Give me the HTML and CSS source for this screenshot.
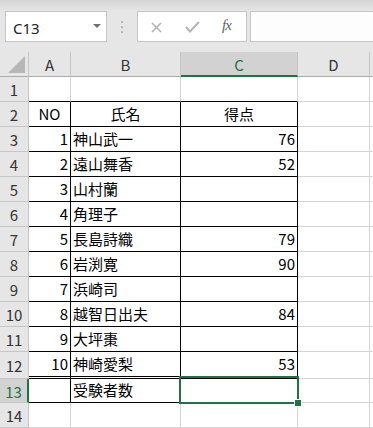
FILE: index.html
```html
<!DOCTYPE html>
<html lang="ja">
<head>
    <meta charset="UTF-8">
    <title>Excel - 受験者数</title>
    <link rel="stylesheet" href="styles.css">
</head>
<body>
    <div class="app">
        <div class="top-band"></div>

        <div class="formula-row">
            <div class="name-box">
                <span class="name-text">C13</span>
                <span class="caret"></span>
            </div>
            <div class="grip">
                <svg width="3" height="12" viewBox="0 0 3 12">
                    <rect x="0" y="0" width="2" height="2" fill="#b9b9b9"/>
                    <rect x="0" y="5" width="2" height="2" fill="#b9b9b9"/>
                    <rect x="0" y="10" width="2" height="2" fill="#b9b9b9"/>
                </svg>
            </div>
            <div class="fx-buttons">
                <svg class="btn-cancel" width="11" height="11" viewBox="0 0 11 11">
                    <path d="M1 1 L10 10 M10 1 L1 10" stroke="#b4b4b4" stroke-width="1.6" fill="none"/>
                </svg>
                <svg class="btn-enter" width="15" height="12" viewBox="0 0 15 12">
                    <path d="M1 6 L5 10.5 L14 1" stroke="#b4b4b4" stroke-width="2" fill="none"/>
                </svg>
                <span class="btn-fx"><i>f</i><i>x</i></span>
            </div>
            <div class="formula-input"></div>
        </div>

        <div class="sheet">
            <!-- header -->
            <div class="corner"><span class="corner-tri"></span></div>
            <div class="col-head">A</div>
            <div class="col-head">B</div>
            <div class="col-head active">C</div>
            <div class="col-head">D</div>
            <div class="col-head"></div>

            <!-- row 1 -->
            <div class="row-head">1</div>
            <div class="cell bb"></div>
            <div class="cell bb"></div>
            <div class="cell bb"></div>
            <div class="cell"></div>
            <div class="cell"></div>

            <!-- row 2 -->
            <div class="row-head">2</div>
            <div class="cell line center">NO</div>
            <div class="cell line center">氏名</div>
            <div class="cell line br center">得点</div>
            <div class="cell"></div>
            <div class="cell"></div>

            <div class="row-head">3</div>
            <div class="cell line num">1</div>
            <div class="cell line">神山武一</div>
            <div class="cell line br num">76</div>
            <div class="cell"></div>
            <div class="cell"></div>

            <div class="row-head">4</div>
            <div class="cell line num">2</div>
            <div class="cell line">遠山舞香</div>
            <div class="cell line br num">52</div>
            <div class="cell"></div>
            <div class="cell"></div>

            <div class="row-head">5</div>
            <div class="cell line num">3</div>
            <div class="cell line">山村蘭</div>
            <div class="cell line br num"></div>
            <div class="cell"></div>
            <div class="cell"></div>

            <div class="row-head">6</div>
            <div class="cell line num">4</div>
            <div class="cell line">角理子</div>
            <div class="cell line br num"></div>
            <div class="cell"></div>
            <div class="cell"></div>

            <div class="row-head">7</div>
            <div class="cell line num">5</div>
            <div class="cell line">長島詩織</div>
            <div class="cell line br num">79</div>
            <div class="cell"></div>
            <div class="cell"></div>

            <div class="row-head">8</div>
            <div class="cell line num">6</div>
            <div class="cell line">岩渕寛</div>
            <div class="cell line br num">90</div>
            <div class="cell"></div>
            <div class="cell"></div>

            <div class="row-head">9</div>
            <div class="cell line num">7</div>
            <div class="cell line">浜崎司</div>
            <div class="cell line br num"></div>
            <div class="cell"></div>
            <div class="cell"></div>

            <div class="row-head">10</div>
            <div class="cell line num">8</div>
            <div class="cell line">越智日出夫</div>
            <div class="cell line br num">84</div>
            <div class="cell"></div>
            <div class="cell"></div>

            <div class="row-head">11</div>
            <div class="cell line num">9</div>
            <div class="cell line">大坪棗</div>
            <div class="cell line br num"></div>
            <div class="cell"></div>
            <div class="cell"></div>

            <div class="row-head">12</div>
            <div class="cell line dbl num">10</div>
            <div class="cell line dbl">神崎愛梨</div>
            <div class="cell line dbl br num">53</div>
            <div class="cell"></div>
            <div class="cell"></div>

            <!-- row 13 -->
            <div class="row-head active">13</div>
            <div class="cell line"></div>
            <div class="cell line">受験者数</div>
            <div class="cell line br selected">
                <div class="selection"><span class="fill-handle"></span></div>
            </div>
            <div class="cell"></div>
            <div class="cell"></div>

            <div class="row-head">14</div>
            <div class="cell"></div>
            <div class="cell"></div>
            <div class="cell"></div>
            <div class="cell"></div>
            <div class="cell"></div>
        </div>
    </div>
</body>
</html>
```

FILE: styles.css
```css
:root {
    --toolbar: #e6e6e6;
    --head: #e6e6e6;
    --head-active: #d2d2d2;
    --head-line: #c6c6c6;
    --grid: #d4d4d4;
    --green: #217346;
    --text: #000;
}

* {
    margin: 0;
    padding: 0;
    box-sizing: border-box;
}

body {
    background-color: var(--toolbar);
    font-family: "Noto Sans CJK JP", "Noto Sans", sans-serif;
    overflow: hidden;
}

.app {
    width: 373px;
    height: 428px;
    overflow: hidden;
}

.top-band {
    height: 10px;
    background: linear-gradient(#d5d5d5, #e4e4e4);
}

/* formula bar */
.formula-row {
    display: flex;
    align-items: stretch;
    height: 31px;
    margin-top: 1px;
    margin-bottom: 10px;
    padding-left: 5px;
}

.name-box {
    width: 102px;
    background-color: white;
    border: 1px solid var(--head-line);
    display: flex;
    align-items: center;
    justify-content: space-between;
    padding: 2px 5px 0 7px;
}

.name-text {
    font-family: "Noto Sans", sans-serif;
    font-size: 15px;
    color: #222;
}

.caret {
    width: 0;
    height: 0;
    border-left: 4px solid transparent;
    border-right: 4px solid transparent;
    border-top: 4px solid #6f6f6f;
    margin-top: -4px;
}

.grip {
    width: 30px;
    display: flex;
    align-items: center;
    padding-left: 14px;
}

.fx-buttons {
    width: 110px;
    background-color: white;
    border: 1px solid var(--head-line);
    position: relative;
}

.btn-cancel {
    position: absolute;
    left: 13px;
    top: 10px;
}

.btn-enter {
    position: absolute;
    left: 47px;
    top: 9px;
}

.btn-fx {
    position: absolute;
    left: 84px;
    top: 5px;
    font-family: "Liberation Serif", serif;
    font-size: 15px;
    color: #666;
    letter-spacing: -1px;
}

.formula-input {
    flex: 1;
    margin-left: 3px;
    background-color: #fdfdfd;
    border: 1px solid var(--head-line);
    border-right: none;
}

/* sheet grid */
.sheet {
    display: grid;
    grid-template-columns: 29px 42px 110px 117px 72px 40px;
    grid-template-rows: 25px repeat(11, 25px) 27px 24px 25px;
    background-color: white;
    font-size: 15px;
    color: var(--text);
}

.corner,
.col-head,
.row-head {
    background-color: var(--head);
    color: #333;
    display: flex;
    align-items: center;
    justify-content: center;
}

.corner {
    border-right: 1px solid var(--head-line);
    border-bottom: 1px solid #ababab;
    position: relative;
}

.corner-tri {
    position: absolute;
    right: 3px;
    bottom: 3px;
    width: 0;
    height: 0;
    border-left: 17px solid transparent;
    border-bottom: 17px solid #b7b7b7;
}

.col-head {
    border-right: 1px solid var(--head-line);
    border-bottom: 1px solid #ababab;
    padding-top: 1px;
}

.col-head.active {
    background-color: var(--head-active);
    color: var(--green);
    border-bottom: 2px solid var(--green);
}

.row-head {
    border-right: 1px solid var(--head-line);
    border-bottom: 1px solid var(--head-line);
    padding-top: 1px;
}

.row-head.active {
    background-color: var(--head-active);
    color: var(--green);
    border-right: 2px solid var(--green);
}

.cell {
    border-right: 1px solid var(--grid);
    border-bottom: 1px solid var(--grid);
    display: flex;
    align-items: flex-end;
    padding: 0 2px 2px 2px;
    line-height: 20px;
    white-space: nowrap;
}

/* black ruled cells */
.cell.line {
    border-right-color: #000;
    border-bottom-color: #000;
}

.cell.bb {
    border-bottom-color: #000;
}

.cell.dbl {
    border-bottom: 3px double #000;
}

.cell.center {
    justify-content: center;
}

.cell.num {
    justify-content: flex-end;
}

.cell.selected {
    position: relative;
}

.selection {
    position: absolute;
    left: -2px;
    top: -3px;
    width: 120px;
    height: 28px;
    border: 2px solid var(--green);
}

.fill-handle {
    position: absolute;
    right: -4px;
    bottom: -4px;
    width: 6px;
    height: 6px;
    background-color: var(--green);
    outline: 1px solid white;
}
```
